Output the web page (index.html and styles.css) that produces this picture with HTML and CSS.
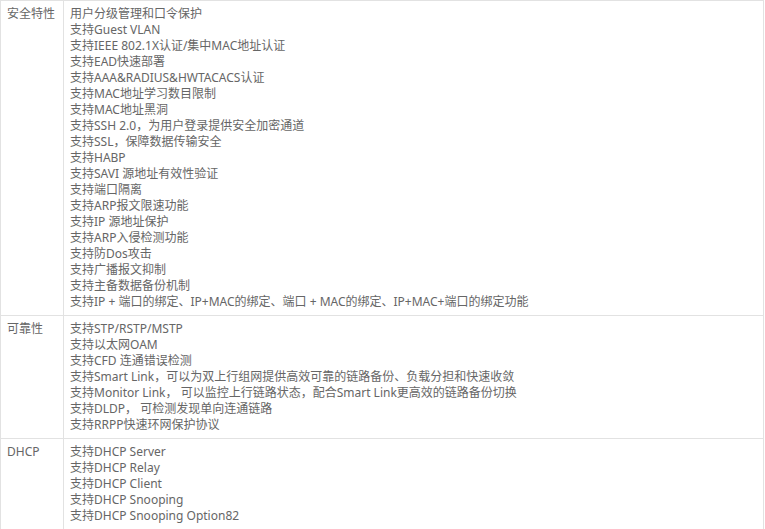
FILE: index.html
```html
<!DOCTYPE html>
<html lang="zh-CN">
<head>
    <meta charset="UTF-8">
    <title>产品特性</title>
    <link rel="stylesheet" href="styles.css">
</head>
<body>
    <table class="spec">
        <tr>
            <td class="name">安全特性</td>
            <td class="items">
                用户分级管理和口令保护<br>
                支持Guest VLAN<br>
                支持IEEE 802.1X认证/集中MAC地址认证<br>
                支持EAD快速部署<br>
                支持AAA&amp;RADIUS&amp;HWTACACS认证<br>
                支持MAC地址学习数目限制<br>
                支持MAC地址黑洞<br>
                支持SSH 2.0，为用户登录提供安全加密通道<br>
                支持SSL，保障数据传输安全<br>
                支持HABP<br>
                支持SAVI 源地址有效性验证<br>
                支持端口隔离<br>
                支持ARP报文限速功能<br>
                支持IP 源地址保护<br>
                支持ARP入侵检测功能<br>
                支持防Dos攻击<br>
                支持广播报文抑制<br>
                支持主备数据备份机制<br>
                支持IP + 端口的绑定、IP+MAC的绑定、端口 + MAC的绑定、IP+MAC+端口的绑定功能
            </td>
        </tr>
        <tr>
            <td class="name">可靠性</td>
            <td class="items">
                支持STP/RSTP/MSTP<br>
                支持以太网OAM<br>
                支持CFD 连通错误检测<br>
                支持Smart Link，可以为双上行组网提供高效可靠的链路备份、负载分担和快速收敛<br>
                支持Monitor Link， 可以监控上行链路状态，配合Smart Link更高效的链路备份切换<br>
                支持DLDP， 可检测发现单向连通链路<br>
                支持RRPP快速环网保护协议
            </td>
        </tr>
        <tr>
            <td class="name">DHCP</td>
            <td class="items">
                支持DHCP Server<br>
                支持DHCP Relay<br>
                支持DHCP Client<br>
                支持DHCP Snooping<br>
                支持DHCP Snooping Option82
            </td>
        </tr>
    </table>
</body>
</html>
```

FILE: styles.css
```css
body {
    margin: 0;
    background-color: #fff;
    font-family: "Noto Sans", "Noto Sans CJK SC", sans-serif;
    font-size: 12px;
    color: #666;
}
.spec {
    width: 764px;
    border-collapse: collapse;
}
.spec td {
    border: 1px solid #e2e2e2;
    padding: 5px 6px 5px 6px;
    line-height: 16px;
    vertical-align: top;
    text-align: left;
}
.spec .name {
    width: 50px;
    white-space: nowrap;
}
```
